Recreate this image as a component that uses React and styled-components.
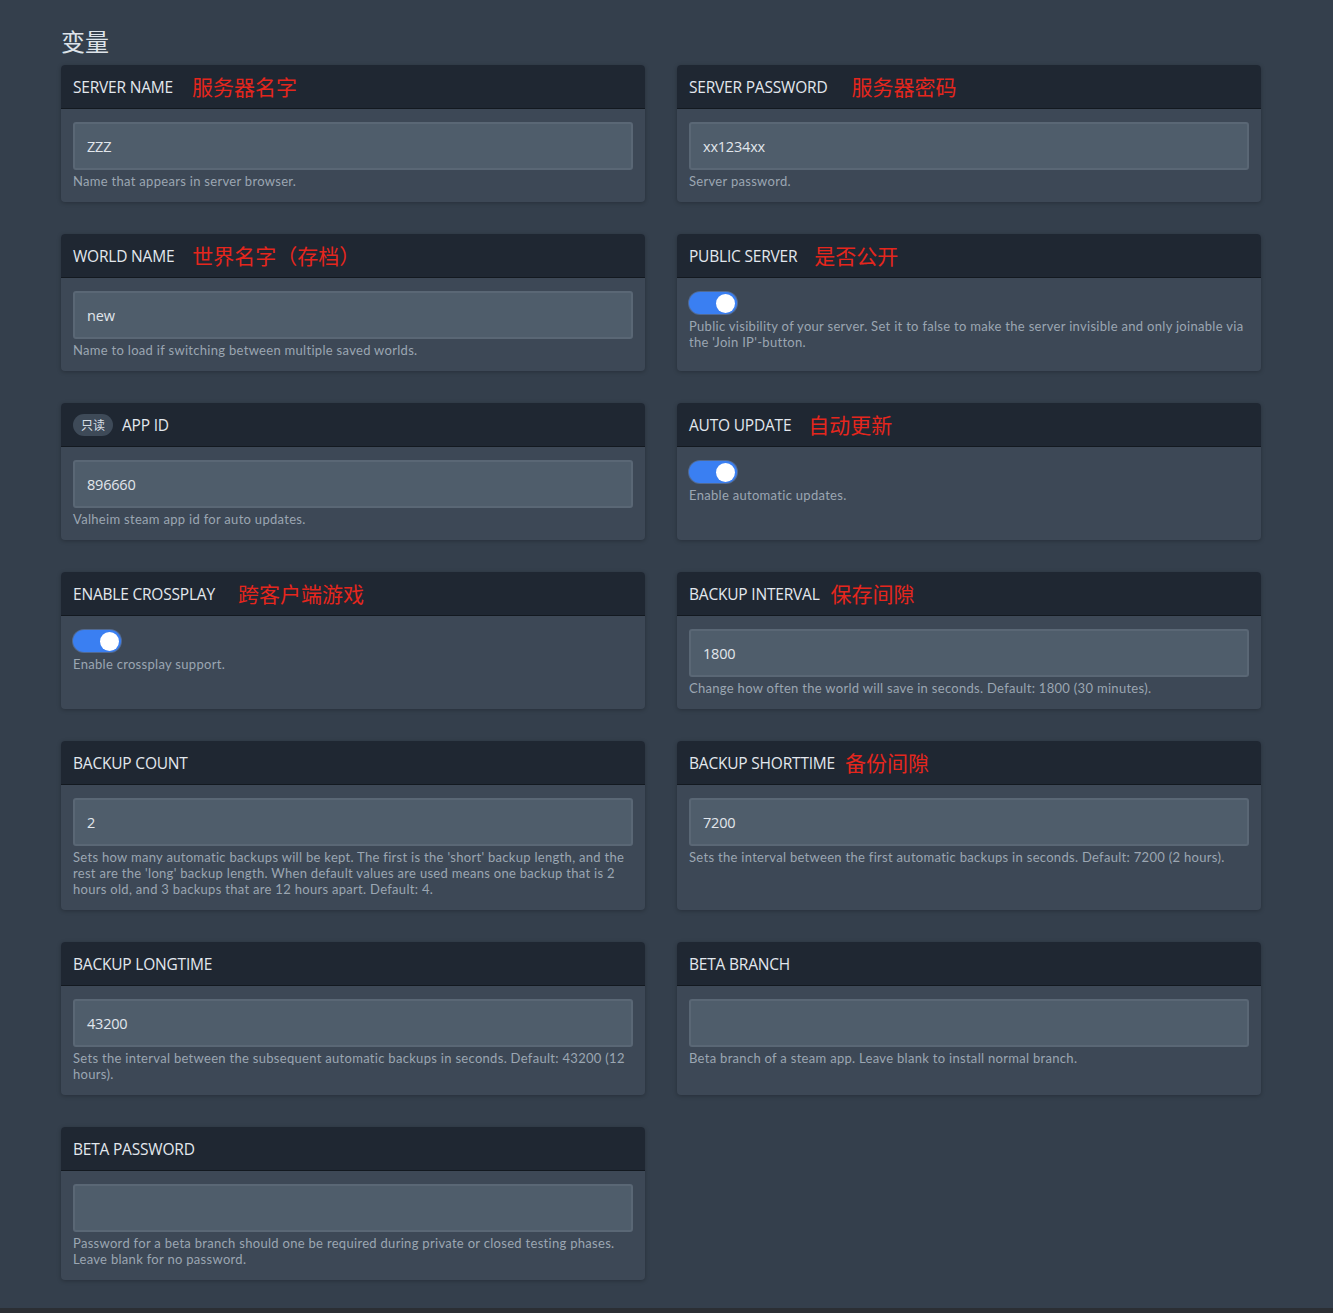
import React from "react";
import styled, { createGlobalStyle } from "styled-components";

const Global = createGlobalStyle`
  html, body { margin: 0; padding: 0; background: #343f4c; }
  body { font-family: Lato, "Open Sans", "Noto Sans CJK SC", sans-serif; color: #dfe5eb; }
`;

const Page = styled.div`
  min-height: 1308px;
  padding: 25px 72px 28px 61px;
  box-sizing: border-box;
  background: #343f4c;
`;

const Footer = styled.div`
  height: 5px;
  background: #2b2f34;
`;

const Title = styled.h2`
  margin: 0 0 9px 0;
  font-family: "Noto Sans CJK SC", sans-serif;
  font-weight: 400;
  font-size: 24px;
  line-height: 31px;
  color: #dde3e9;
`;

const Grid = styled.div`
  display: grid;
  grid-template-columns: 584px 584px;
  column-gap: 32px;
  row-gap: 32px;
`;

const Card = styled.section`
  background: #3d4856;
  border-radius: 4px;
  overflow: hidden;
  box-shadow: 0 1px 4px rgba(0, 0, 0, 0.25);
  display: flex;
  flex-direction: column;
`;

const Header = styled.div`
  height: 43px;
  display: flex;
  align-items: center;
  padding: 0 12px;
  background: #1f2732;
  border-bottom: 1px solid #131920;
`;

const Label = styled.span`
  font-family: "Open Sans", sans-serif;
  font-size: 15.5px;
  letter-spacing: -0.2px;
  color: #e3e8ee;
  text-transform: uppercase;
`;

const Note = styled.span`
  margin-left: ${(p) => p.$gap}px;
  font-family: "Noto Sans CJK SC", sans-serif;
  font-size: 21px;
  color: #e5261d;
  line-height: 1;
`;

const Badge = styled.span`
  display: inline-flex;
  align-items: center;
  justify-content: center;
  height: 22px;
  padding: 0 8px;
  margin-right: 9px;
  border-radius: 11px;
  background: #3e4a58;
  font-family: "Noto Sans CJK SC", sans-serif;
  font-size: 12px;
  color: #d8dee5;
`;

const Body = styled.div`
  padding: 13px 12px 13px 12px;
  flex: 1;
`;

const Input = styled.div`
  height: 44px;
  box-sizing: content-box;
  border: 2px solid #5a6775;
  border-radius: 3px;
  background: #4f5d6b;
  display: flex;
  align-items: center;
  padding: 0 12px;
  font-family: "Open Sans", sans-serif;
  font-size: 14.5px;
  color: #e1e6ec;
  letter-spacing: -0.2px;
`;

const Help = styled.p`
  margin: 3px 0 0 0;
  font-family: Lato, sans-serif;
  font-size: 13px;
  letter-spacing: 0.3px;
  line-height: 16px;
  color: #9ba6b2;
`;

const ToggleTrack = styled.div`
  width: 48px;
  height: 22px;
  border-radius: 11px;
  background: #3a7ff2;
  box-shadow: 0 0 0 1px rgba(120, 170, 255, 0.35);
  display: flex;
  align-items: center;
  justify-content: flex-end;
  padding: 0 2px;
  box-sizing: border-box;
`;

const Knob = styled.div`
  width: 19px;
  height: 19px;
  border-radius: 50%;
  background: #ffffff;
`;

const ToggleBody = styled(Body)`
  padding-top: 14px;
  ${Help} { margin-top: 4px; }
`;

const items = [
  { label: "Server Name", note: "服务器名字", gap: 19, value: "ZZZ", help: "Name that appears in server browser." },
  { label: "Server Password", note: "服务器密码", gap: 24, value: "xx1234xx", help: "Server password." },
  { label: "World Name", note: "世界名字（存档）", gap: 18, value: "new", help: "Name to load if switching between multiple saved worlds." },
  { label: "Public Server", note: "是否公开", gap: 17, toggle: true, help: "Public visibility of your server. Set it to false to make the server invisible and only joinable via the 'Join IP'-button." },
  { label: "App ID", badge: "只读", value: "896660", help: "Valheim steam app id for auto updates." },
  { label: "Auto Update", note: "自动更新", gap: 17, toggle: true, help: "Enable automatic updates." },
  { label: "Enable Crossplay", note: "跨客户端游戏", gap: 23, toggle: true, help: "Enable crossplay support." },
  { label: "Backup Interval", note: "保存间隙", gap: 11, value: "1800", help: "Change how often the world will save in seconds. Default: 1800 (30 minutes)." },
  { label: "Backup Count", value: "2", help: "Sets how many automatic backups will be kept. The first is the 'short' backup length, and the rest are the 'long' backup length. When default values are used means one backup that is 2 hours old, and 3 backups that are 12 hours apart. Default: 4." },
  { label: "Backup Shorttime", note: "备份间隙", gap: 10, value: "7200", help: "Sets the interval between the first automatic backups in seconds. Default: 7200 (2 hours)." },
  { label: "Backup Longtime", value: "43200", help: "Sets the interval between the subsequent automatic backups in seconds. Default: 43200 (12 hours)." },
  { label: "Beta Branch", value: "", help: "Beta branch of a steam app. Leave blank to install normal branch." },
  { label: "Beta Password", value: "", help: "Password for a beta branch should one be required during private or closed testing phases. Leave blank for no password." },
];

function VarCard({ item }) {
  return (
    <Card>
      <Header>
        {item.badge && <Badge>{item.badge}</Badge>}
        <Label>{item.label}</Label>
        {item.note && <Note $gap={item.gap}>{item.note}</Note>}
      </Header>
      {item.toggle ? (
        <ToggleBody>
          <ToggleTrack>
            <Knob />
          </ToggleTrack>
          <Help>{item.help}</Help>
        </ToggleBody>
      ) : (
        <Body>
          <Input>{item.value}</Input>
          <Help>{item.help}</Help>
        </Body>
      )}
    </Card>
  );
}

export default function App() {
  return (
    <>
      <Global />
      <Page>
        <Title>变量</Title>
        <Grid>
          {items.map((it) => (
            <VarCard key={it.label} item={it} />
          ))}
        </Grid>
      </Page>
      <Footer />
    </>
  );
}
